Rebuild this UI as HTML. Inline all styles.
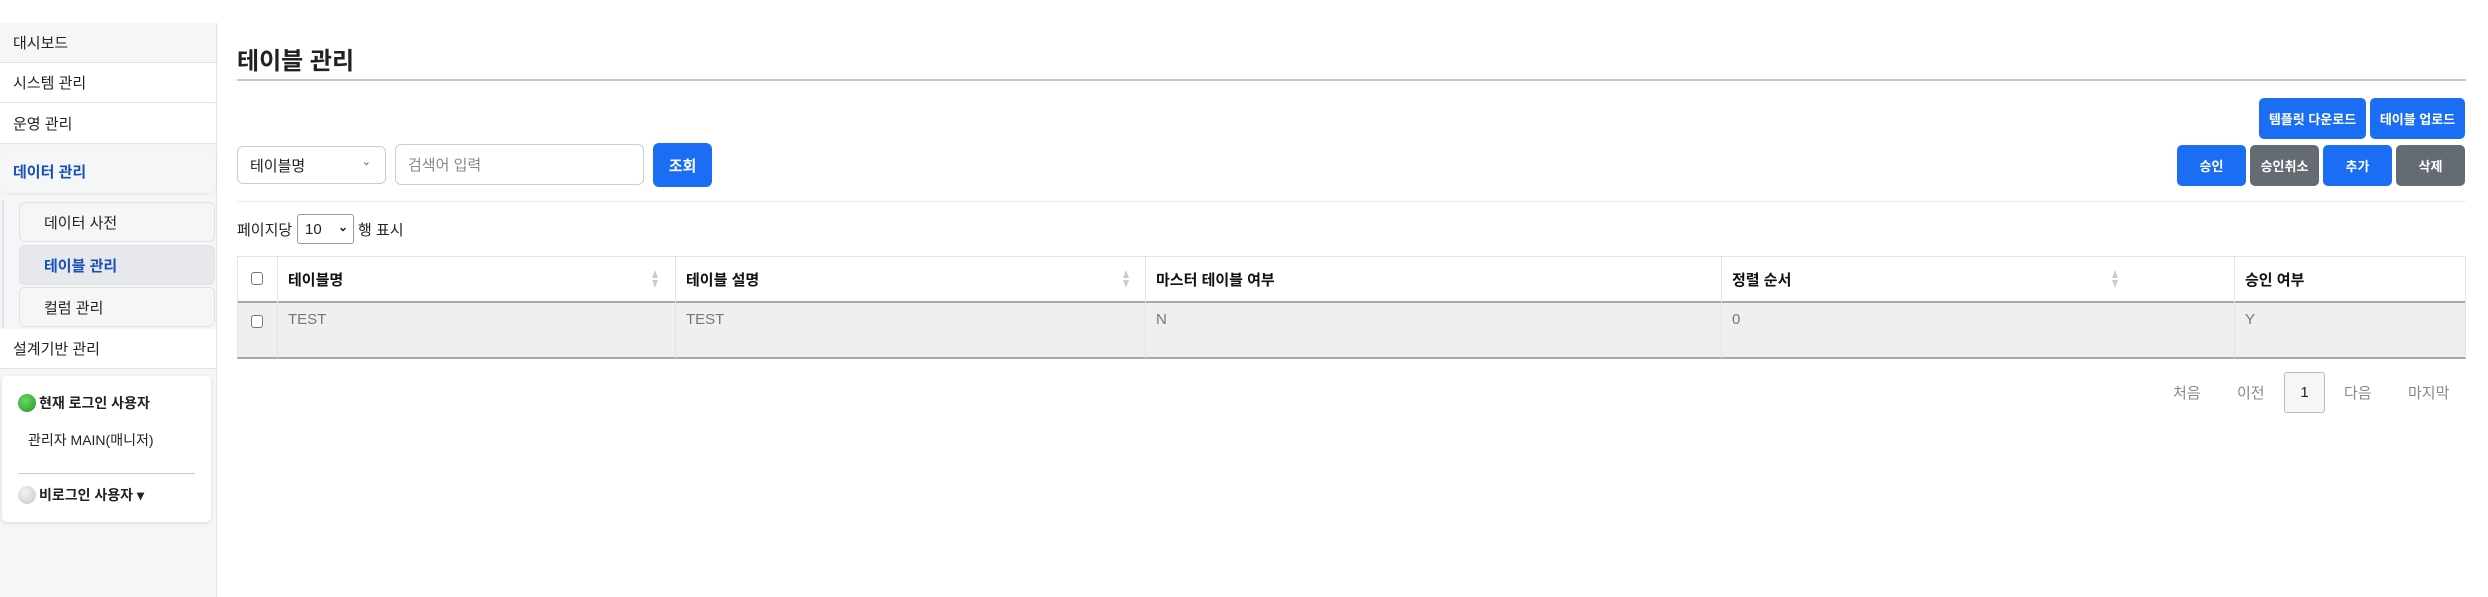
<!DOCTYPE html>
<html><head><meta charset="utf-8"><style>
*{box-sizing:border-box;margin:0;padding:0}
body{width:2488px;height:597px;position:relative;background:#fff;font-family:"Liberation Sans","Noto Sans CJK KR",sans-serif;color:#222;overflow:hidden}
.a{position:absolute}
.side{left:0;top:23px;width:217px;height:574px;background:#f5f6f8;border-right:1px solid #e3e5e8}
.it{left:0;width:216px;font-size:15px;display:flex;align-items:center;padding-left:13px;background:#fff;border-bottom:1px solid #e0e2e5}
.sub{left:19px;width:196px;font-size:15px;display:flex;align-items:center;padding-left:24px;background:#f5f6f8;border:1px solid #dfe2e6;border-radius:6px}
.btn{color:#fff;font-size:13px;font-weight:bold;display:flex;align-items:center;justify-content:center;border-radius:5px}
.bl{background:#1b6ef3}.gr{background:#646b73}
.th{top:256px;height:46px;font-size:15px;font-weight:bold;display:flex;align-items:center;color:#111}
.td{top:302px;height:56px;font-size:15px;color:#777;padding-top:9px;font-weight:300}
.vl{top:256px;width:1px;height:102px;background:#dfe2e6}
.sort{width:8px;height:20px;top:269px}
.cb{width:12px;height:13px;border:1px solid #777;border-radius:3px;left:251px;background:#fff}
.pg{top:372px;height:41px;font-size:15px;color:#888;display:flex;align-items:center}
</style></head><body>
<div class="a side"></div>
<div class="a it" style="top:23px;height:40px;background:#f5f6f8;box-shadow:0 2px 3px rgba(0,0,0,.06)">대시보드</div>
<div class="a it" style="top:63px;height:40px">시스템 관리</div>
<div class="a it" style="top:103px;height:41px">운영 관리</div>
<div class="a it" style="top:150px;height:43px;background:#f5f6f8;border-radius:6px;color:#1750b8;font-weight:bold;box-shadow:0 1px 3px rgba(0,0,0,.08);border:none">데이터 관리</div>
<div class="a" style="left:2px;top:200px;width:2px;height:128px;background:#dfe2e6"></div>
<div class="a sub" style="top:202px;height:40px">데이터 사전</div>
<div class="a sub" style="top:245px;height:40px;background:#e6e8eb;color:#1750b8;font-weight:bold">테이블 관리</div>
<div class="a sub" style="top:287px;height:40px">컬럼 관리</div>
<div class="a it" style="top:329px;height:40px">설계기반 관리</div>
<div class="a" style="left:2px;top:376px;width:209px;height:146px;background:#fff;border-radius:5px;box-shadow:0 1px 4px rgba(0,0,0,.12)"></div>
<div class="a" style="left:18px;top:394px;width:18px;height:18px;border-radius:50%;background:radial-gradient(circle at 40% 35%,#6fd36a,#1e9a1e)"></div>
<div class="a" style="left:39px;top:393px;font-size:14px;font-weight:bold">현재 로그인 사용자</div>
<div class="a" style="left:28px;top:430px;font-size:14px">관리자 MAIN(매니저)</div>
<div class="a" style="left:18px;top:473px;width:177px;height:1px;background:#ccc"></div>
<div class="a" style="left:18px;top:486px;width:18px;height:18px;border-radius:50%;background:radial-gradient(circle at 40% 35%,#f2f2f2,#c8c8c8)"></div>
<div class="a" style="left:39px;top:485px;font-size:14px;font-weight:bold">비로그인 사용자 ▾</div>

<div class="a" style="left:237px;top:41px;font-size:24px;font-weight:bold;color:#222">테이블 관리</div>
<div class="a" style="left:237px;top:79px;width:2229px;height:2px;background:#c8c8c8"></div>

<div class="a btn bl" style="left:2259px;top:98px;width:107px;height:41px">템플릿 다운로드</div>
<div class="a btn bl" style="left:2370px;top:98px;width:95px;height:41px">테이블 업로드</div>
<div class="a btn bl" style="left:2177px;top:145px;width:69px;height:41px">승인</div>
<div class="a btn gr" style="left:2250px;top:145px;width:69px;height:41px">승인취소</div>
<div class="a btn bl" style="left:2323px;top:145px;width:69px;height:41px">추가</div>
<div class="a btn gr" style="left:2396px;top:145px;width:69px;height:41px">삭제</div>

<div class="a" style="left:237px;top:146px;width:149px;height:38px;border:1px solid #ccc;border-radius:6px;font-size:15px;display:flex;align-items:center;padding-left:12px">테이블명<span style="position:absolute;right:14px;top:8px;font-size:11px;color:#555">⌄</span></div>
<div class="a" style="left:395px;top:144px;width:249px;height:41px;border:1px solid #ccc;border-radius:6px;font-size:15px;color:#888;display:flex;align-items:center;padding-left:12px">검색어 입력</div>
<div class="a btn bl" style="left:653px;top:143px;width:59px;height:44px;font-size:15px;border-radius:6px">조회</div>
<div class="a" style="left:237px;top:201px;width:2229px;height:1px;background:#ececec"></div>

<div class="a" style="left:237px;top:219px;font-size:15px">페이지당</div>
<div class="a" style="left:297px;top:214px;width:57px;height:30px;border:1px solid #999;border-radius:3px;font-size:15px;padding:6px 0 0 7px">10<span style="position:absolute;right:5px;top:5px;font-size:12px;font-weight:bold">⌄</span></div>
<div class="a" style="left:358px;top:219px;font-size:15px">행 표시</div>

<div class="a" style="left:237px;top:256px;width:2229px;height:1px;background:#dfe2e6"></div>
<div class="a" style="left:237px;top:302px;width:2229px;height:56px;background:#efefef"></div>
<div class="a" style="left:237px;top:301px;width:2229px;height:2px;background:#a8a8a8"></div>
<div class="a" style="left:237px;top:357px;width:2229px;height:2px;background:#a8a8a8"></div>
<div class="a vl" style="left:237px"></div><div class="a vl" style="left:277px"></div><div class="a vl" style="left:675px"></div><div class="a vl" style="left:1145px"></div><div class="a vl" style="left:1721px"></div><div class="a vl" style="left:2234px"></div><div class="a vl" style="left:2465px"></div>
<div class="a cb" style="top:272px"></div><div class="a cb" style="top:315px"></div>
<div class="a th" style="left:288px">테이블명</div>
<div class="a th" style="left:686px">테이블 설명</div>
<div class="a th" style="left:1156px">마스터 테이블 여부</div>
<div class="a th" style="left:1732px">정렬 순서</div>
<div class="a th" style="left:2245px">승인 여부</div>
<svg class="a sort" style="left:651px" viewBox="0 0 8 20"><path d="M4 1L7 9H1Z M4 19L7 11H1Z" fill="#ccc"/></svg>
<svg class="a sort" style="left:1122px" viewBox="0 0 8 20"><path d="M4 1L7 9H1Z M4 19L7 11H1Z" fill="#ccc"/></svg>
<svg class="a sort" style="left:2111px" viewBox="0 0 8 20"><path d="M4 1L7 9H1Z M4 19L7 11H1Z" fill="#ccc"/></svg>
<div class="a td" style="left:288px">TEST</div>
<div class="a td" style="left:686px">TEST</div>
<div class="a td" style="left:1156px">N</div>
<div class="a td" style="left:1732px">0</div>
<div class="a td" style="left:2245px">Y</div>

<div class="a pg" style="left:2173px">처음</div>
<div class="a pg" style="left:2237px">이전</div>
<div class="a pg" style="left:2284px;width:41px;justify-content:center;border:1px solid #bbb;border-radius:3px;background:#f6f6f6;color:#222">1</div>
<div class="a pg" style="left:2344px">다음</div>
<div class="a pg" style="left:2408px">마지막</div>
</body></html>
